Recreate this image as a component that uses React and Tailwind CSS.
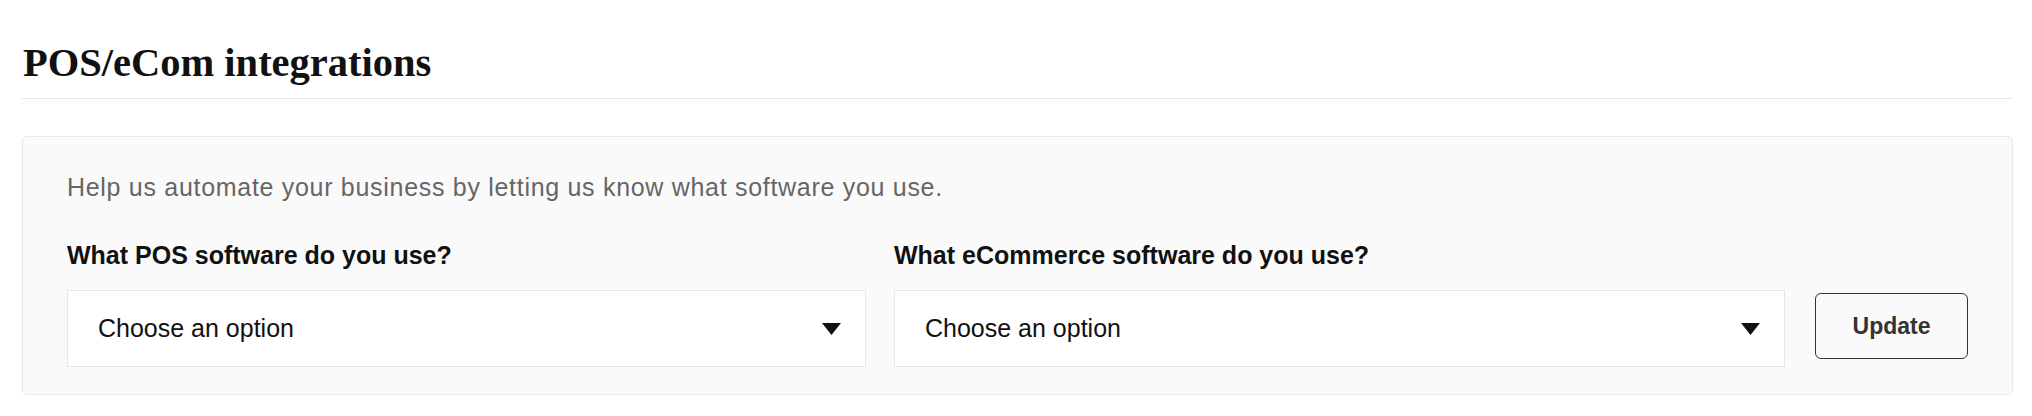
import React from "react";

function Caret() {
  return (
    <svg width="19" height="12" viewBox="0 0 19 12" className="shrink-0">
      <path d="M0 0 L19 0 L9.5 12 Z" fill="#111" />
    </svg>
  );
}

function SelectBox({ className }) {
  return (
    <div
      className={
        "flex h-[77px] items-center justify-between border border-[#e6e6e6] bg-white pl-[30px] pr-[24px] " +
        className
      }
    >
      <span className="text-[25px] text-[#111]">Choose an option</span>
      <Caret />
    </div>
  );
}

export default function App() {
  return (
    <div className="min-h-[416px] bg-white pl-[22px] pr-[19px] font-['Liberation_Sans',Arial,sans-serif]">
      <div className="border-b border-[#e8e8e8] pt-[40px] pb-[13px]">
        <h1 className="pl-px font-['Liberation_Serif',serif] text-[40.5px] font-semibold leading-[45px] text-[#111]">
          POS/eCom integrations
        </h1>
      </div>

      <div className="mt-[37px] rounded-[5px] border border-[#e8e8e8] bg-[#fafafa] px-[44px] pt-[34px] pb-[27px]">
        <p className="text-[25px] leading-[32px] tracking-[0.7px] text-[#666]">
          Help us automate your business by letting us know what software you use.
        </p>

        <div className="mt-[36px] flex items-end">
          <div className="w-[799px] shrink-0">
            <div className="text-[25px] font-bold leading-[32px] text-[#111]">What POS software do you use?</div>
            <SelectBox className="mt-[19px]" />
          </div>
          <div className="ml-[28px] flex-1">
            <div className="text-[25px] font-bold leading-[32px] text-[#111]">
              What eCommerce software do you use?
            </div>
            <div className="mt-[19px] flex items-center">
              <SelectBox className="flex-1" />
              <button className="ml-[30px] mb-[5px] h-[66px] w-[153px] rounded-[6px] border border-[#333] bg-transparent text-[23px] font-semibold text-[#333]">
                Update
              </button>
            </div>
          </div>
        </div>
      </div>
    </div>
  );
}
